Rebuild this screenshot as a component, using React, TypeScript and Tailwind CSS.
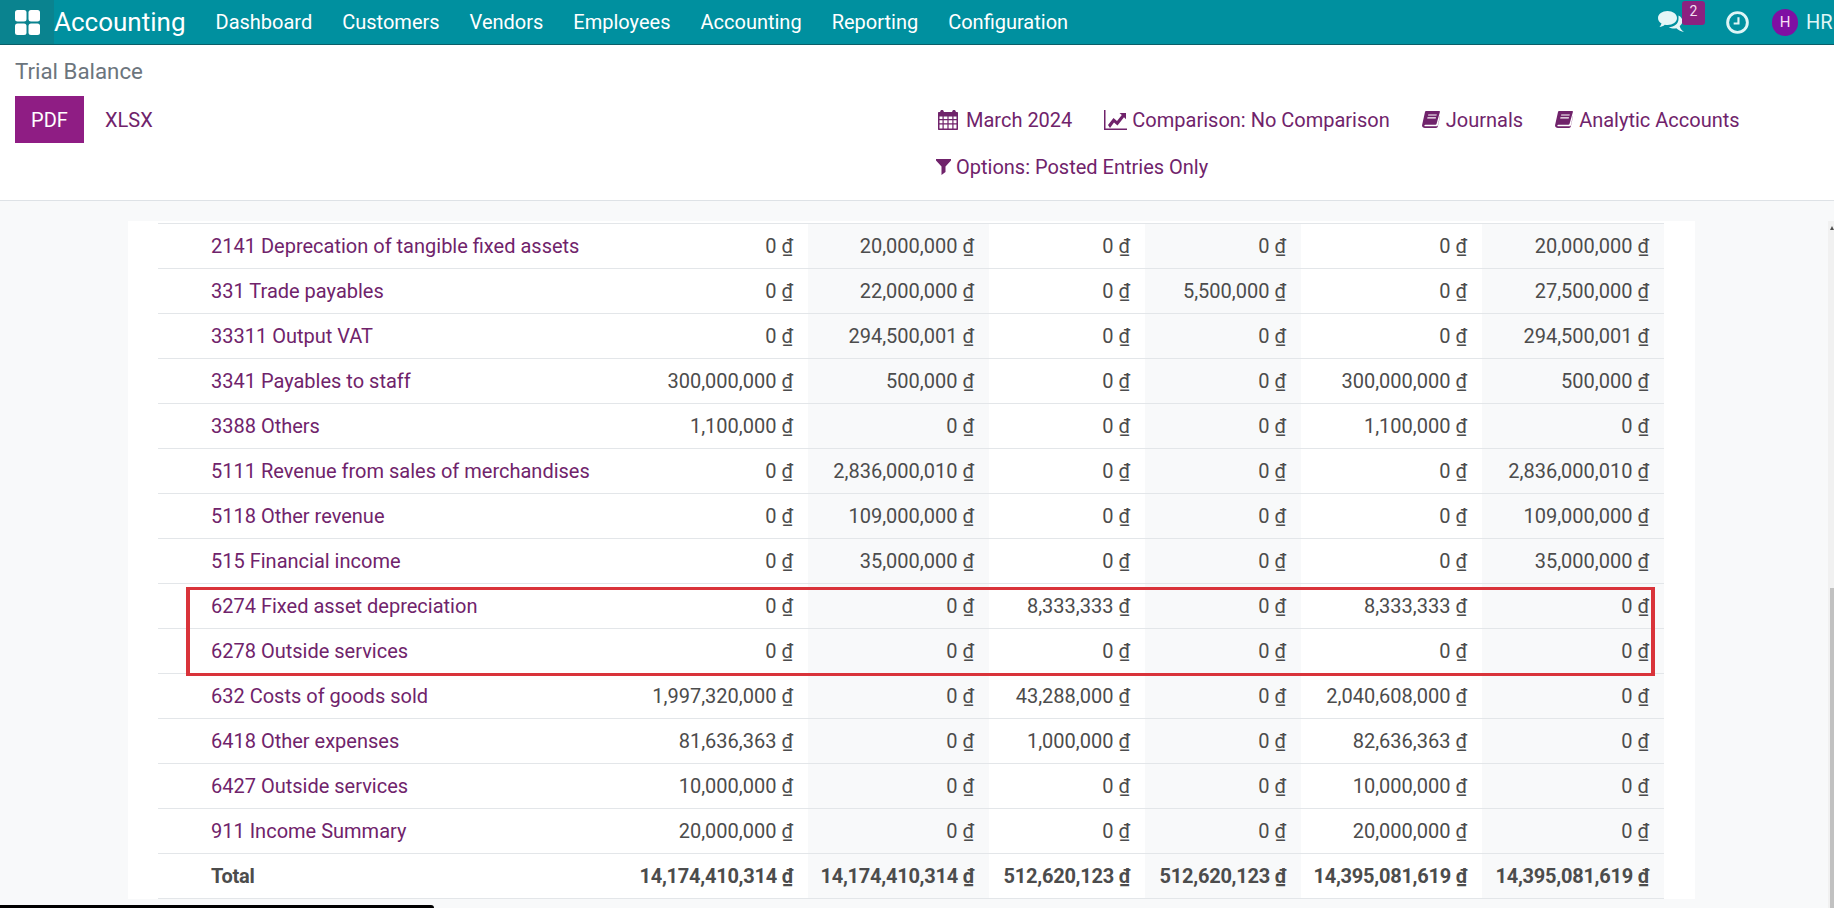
const FONT = "font-['Roboto','Noto_Sans',sans-serif]";

const navItems = ['Dashboard', 'Customers', 'Vendors', 'Employees', 'Accounting', 'Reporting', 'Configuration'];

const rows = [
  ['2141 Deprecation of tangible fixed assets', '0', '20,000,000', '0', '0', '0', '20,000,000'],
  ['331 Trade payables', '0', '22,000,000', '0', '5,500,000', '0', '27,500,000'],
  ['33311 Output VAT', '0', '294,500,001', '0', '0', '0', '294,500,001'],
  ['3341 Payables to staff', '300,000,000', '500,000', '0', '0', '300,000,000', '500,000'],
  ['3388 Others', '1,100,000', '0', '0', '0', '1,100,000', '0'],
  ['5111 Revenue from sales of merchandises', '0', '2,836,000,010', '0', '0', '0', '2,836,000,010'],
  ['5118 Other revenue', '0', '109,000,000', '0', '0', '0', '109,000,000'],
  ['515 Financial income', '0', '35,000,000', '0', '0', '0', '35,000,000'],
  ['6274 Fixed asset depreciation', '0', '0', '8,333,333', '0', '8,333,333', '0'],
  ['6278 Outside services', '0', '0', '0', '0', '0', '0'],
  ['632 Costs of goods sold', '1,997,320,000', '0', '43,288,000', '0', '2,040,608,000', '0'],
  ['6418 Other expenses', '81,636,363', '0', '1,000,000', '0', '82,636,363', '0'],
  ['6427 Outside services', '10,000,000', '0', '0', '0', '10,000,000', '0'],
  ['911 Income Summary', '20,000,000', '0', '0', '0', '20,000,000', '0'],
];

const total = ['Total', '14,174,410,314', '14,174,410,314', '512,620,123', '512,620,123', '14,395,081,619', '14,395,081,619'];

const Money = ({ value }: { value: string }) => <span>{value}&nbsp;₫</span>;

const CalendarIcon = () => (
  <svg viewBox="0 0 20 20" className="h-[20px] w-[20px]" fill="currentColor">
    <path
      fillRule="evenodd"
      d="M4 0c1 0 1.800.6 1.800 1.500V2h8.400v-.5C14.200.6 15 0 16 0s1.800.6 1.800 1.500V2H19c.6 0 1 .4 1 1v16c0 .6-.4 1-1 1H1c-.6 0-1-.4-1-1V3c0-.6.4-1 1-1h1.200v-.5C2.200.6 3 0 4 0zM1.500 6.500V9h3V6.500zm4.200 0V9h3.700V6.500zm4.900 0V9h3.700V6.500zm4.900 0V9h3V6.500zM1.500 10.200v3h3v-3zm4.200 0v3h3.700v-3zm4.900 0v3h3.700v-3zm4.900 0v3h3v-3zM1.500 14.400v4h3v-4zm4.200 0v4h3.700v-4zm4.900 0v4h3.700v-4zm4.900 0v4h3v-4z"
    />
  </svg>
);

const ChartIcon = () => (
  <svg viewBox="0 0 23 20" className="h-[20px] w-[23px]" fill="currentColor">
    <path d="M0 0h1.500v18.500H23V20H0z" />
    <path d="M4 15l5.500-7 3.500 3 4.800-6-2.300-2H22v6.200l-2-2-6.500 8.300-3.500-3-4 5.500z" />
  </svg>
);

const BookIcon = () => (
  <svg viewBox="0 0 18 17" className="h-[17px] w-[18px]" fill="currentColor">
    <path
      fillRule="evenodd"
      d="M4 0h13.200c.6 0 .9.500.7 1l-3.400 12c-.2.500-.6.800-1.200.8H3.400c-.8 0-1.200.4-1 .9.100.4.500.6 1 .6h11.400c.5 0 .9-.3 1-.8L18 4.500v.9l-2.200 10.200c-.2.800-.8 1.400-1.700 1.400H3C1 17-.3 15.600.1 14L3 1c.1-.6.500-1 1-1zm2.300 3.400l-.3 1.200h8.500l.3-1.200zM5.500 6.200l-.3 1.200h8.500l.3-1.200z"
    />
  </svg>
);

const FilterIcon = () => (
  <svg viewBox="0 0 15 16" className="ml-[-2px] h-[16px] w-[15px]" fill="currentColor">
    <path d="M0 0h15v1.500L9.500 7.500V13L5.500 16V7.500L0 1.500z" />
  </svg>
);

const App = () => {
  return (
    <div className={`relative h-[908px] overflow-hidden bg-[#f8f9fa] text-[20px] leading-[30px] text-[#4c4c4c] ${FONT}`}>
      {/* Top bar */}
      <header className="flex h-[45px] items-center border-b border-[#0a5e68] bg-[#00909f] text-white">
        <div className="flex h-full w-[54px] items-center justify-center bg-[#0a838f]">
          <svg viewBox="0 0 25 25" className="h-[25px] w-[25px]" fill="currentColor">
            <rect x="0" y="0" width="11.500" height="11.500" rx="2.500" />
            <rect x="13.500" y="0" width="11.500" height="11.500" rx="2.500" />
            <rect x="0" y="13.500" width="11.500" height="11.500" rx="2.500" />
            <rect x="13.500" y="13.500" width="11.500" height="11.500" rx="2.500" />
          </svg>
        </div>
        <span className="text-[26px]">Accounting</span>
        <nav className="ml-[30px] flex gap-[30px]">
          {navItems.map((item) => (
            <span key={item}>{item}</span>
          ))}
        </nav>
        <div className="ml-auto flex items-center">
          {/* Messages */}
          <div className="relative mr-[21px] flex h-[44px] w-[47px] items-center">
            <svg viewBox="0 0 26 21" className="mt-[-2px] h-[21px] w-[26px] text-[#e6f6f7]" fill="currentColor">
              <path d="M9.500 0C14.700 0 19 3 19 7s-4.300 7-9.500 7c-1 0-1.900-.1-2.700-.3C5.300 15.100 3.400 15.800 1.500 16c1-1 1.700-2.200 2-3.400C1.400 11.300 0 9.300 0 7c0-4 4.300-7 9.500-7z" />
              <path d="M20.500 4.500c2.500 1.300 4 3.300 4 5.500 0 2-1.100 3.700-2.800 5 .2 1.700 1.500 4 4.300 6-2.400-.2-5.800-2-7.700-3.700-2.500.5-5.500.1-7.500-1 5.500-.3 9.700-3.500 9.700-8.300 0-1.200 0-2.500 0-3.500z" />
            </svg>
            <span className="absolute left-[24px] top-[1px] flex h-[24px] w-[23px] items-start justify-center rounded-[3px] bg-[#8c2180] text-[14px] leading-[20px] text-[#f3dff0]">2</span>
          </div>
          {/* Activities */}
          <svg viewBox="0 0 24 24" className="mr-[23px] h-[23px] w-[23px] text-[#dff5f6]" fill="none" stroke="currentColor">
            <circle cx="12" cy="12" r="10.300" strokeWidth="3" />
            <path d="M13 6.500V13H8" strokeWidth="2.200" />
          </svg>
          <span className="flex h-[27px] w-[26px] items-center justify-center rounded-full bg-[#7f0fa3] text-[15px] text-[#f6dff5]">H</span>
          <span className="ml-[8px] w-[28px] overflow-hidden whitespace-nowrap text-[#dff5f6]">HR</span>
        </div>
      </header>

      {/* Control panel */}
      <section className="h-[156px] border-b border-[#dee2e6] bg-white pl-[15px]">
        <h1 className="pt-[11px] text-[22.300px] leading-[30px] text-[#6c757d]">Trial Balance</h1>
        <div className="flex">
          <div className="mt-[10px] flex w-[923px] items-start">
            <button className="h-[47px] w-[69px] bg-[#8f1d84] text-white">PDF</button>
            <button className="ml-[21px] h-[47px] text-[#70236b]">XLSX</button>
          </div>
          <div className="w-[820px] text-[#70236b]">
            <div className="mt-[10px] flex h-[47px] items-center gap-[32px]">
              <a className="flex items-center gap-[8px]">
                <CalendarIcon />
                March 2024
              </a>
              <a className="flex items-center gap-[5px]">
                <ChartIcon />
                Comparison: No Comparison
              </a>
              <a className="flex items-center gap-[6px]">
                <BookIcon />
                Journals
              </a>
              <a className="flex items-center gap-[6px]">
                <BookIcon />
                Analytic Accounts
              </a>
            </div>
            <div className="flex h-[47px] items-center">
              <a className="flex items-center gap-[5px]">
                <FilterIcon />
                Options: Posted Entries Only
              </a>
            </div>
          </div>
        </div>
      </section>

      {/* Report sheet */}
      <main className="ml-[128px] mt-[20px] w-[1567px] bg-white px-[30px] pt-[2px]">
        <table className="w-[1506px] table-fixed border-collapse">
          <colgroup>
            <col className="w-[440px]" />
            <col className="w-[210px]" />
            <col className="w-[181px]" />
            <col className="w-[156px]" />
            <col className="w-[156px]" />
            <col className="w-[181px]" />
            <col className="w-[182px]" />
          </colgroup>
          <tbody>
            {rows.map((row) => (
              <tr key={row[0]} className="h-[45px] border-t border-[#e3e6e9]">
                <td className="pl-[53px] text-[#70236b]">{row[0]}</td>
                {row.slice(1).map((value, i) => (
                  <td key={i} className={`whitespace-nowrap pr-[15px] text-right ${i % 2 === 1 ? 'bg-[#f8f9fa]' : ''}`}>
                    <Money value={value} />
                  </td>
                ))}
              </tr>
            ))}
            <tr className="h-[45px] border-y border-[#e3e6e9] font-bold tracking-[-0.25px]">
              <td className="pl-[53px]">{total[0]}</td>
              {total.slice(1).map((value, i) => (
                <td key={i} className={`whitespace-nowrap pr-[15px] text-right ${i % 2 === 1 ? 'bg-[#f8f9fa]' : ''}`}>
                  <Money value={value} />
                </td>
              ))}
            </tr>
          </tbody>
        </table>
      </main>

      {/* Annotation box over the two rows */}
      <div className="absolute left-[186px] top-[587px] h-[89px] w-[1469px] border-x-[4px] border-y-[3px] border-[#d9333a]" />

      {/* Browser scrollbar */}
      <div className="absolute right-0 top-[221px] flex h-[687px] w-[6px] flex-col items-end bg-[#f1f1f1]">
        <svg viewBox="0 0 4 4" className="mt-[5px] h-[4px] w-[4px] text-[#505050]" fill="currentColor">
          <path d="M2 0l2 4H0z" />
        </svg>
        <div className="mt-[358px] h-[320px] w-[4px] bg-[#c1c1c1]" />
      </div>

      {/* Window edge */}
      <div className="absolute bottom-0 left-0 h-[3px] w-[434px] rounded-tr-[3px] bg-black" />
    </div>
  );
};

export default App;
